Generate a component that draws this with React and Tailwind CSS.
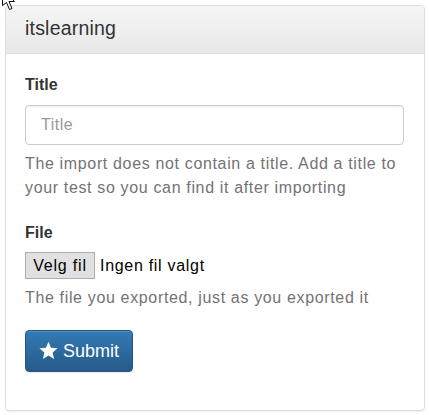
import React from "react";

function Star() {
  return (
    <svg width="19" height="19" viewBox="0 0 24 24" className="mr-[5px] mb-[1px]">
      <path
        d="M12 1l3.2 7.5 8.3.7-6.3 5.4 1.9 8.1L12 18.4l-7.1 4.3 1.9-8.1L.5 9.2l8.3-.7z"
        fill="#fff"
      />
    </svg>
  );
}

export default function App() {
  return (
    <div
      className="relative w-[429px] h-[415px] bg-white pt-[5px] pl-[5px]"
      style={{ fontFamily: '"Liberation Sans", Arial, sans-serif' }}
    >
      <svg
        width="18"
        height="12"
        viewBox="0 0 18 12"
        className="absolute left-0 top-0 z-10"
      >
        <path d="M2.5 -10 L2.5 5.5 L6.5 2.5 L9.5 9.5 L12 8.5 L9 1.5 L14.5 1.5 Z" fill="#fff" stroke="#111" strokeWidth="1" />
      </svg>
      <div className="w-[420px] h-[406px] border border-[#ddd] rounded-[4px] shadow-[0_1px_1px_rgba(0,0,0,0.05)] overflow-hidden">
        <div className="h-[48px] border-b border-[#ddd] bg-gradient-to-b from-[#f5f5f5] to-[#e8e8e8] px-[19px] flex items-center">
          <h3 className="text-[19.5px] text-[#333] leading-none pb-[1px] tracking-[0.2px]">itslearning</h3>
        </div>
        <div className="px-[19px] pt-[19px] text-[16px] leading-[24px]">
          <label className="block font-bold text-[#333]">Title</label>
          <div className="mt-[8px] w-[379px] h-[40px] border border-[#ccc] rounded-[4px] shadow-[inset_0_1px_1px_rgba(0,0,0,0.075)] flex items-center pl-[15px] text-[#999] tracking-[0.5px]">
            Title
          </div>
          <p className="mt-[7px] text-[#737373] tracking-[0.65px]">
            The import does not contain a title. Add a title to your test so you can find it after importing
          </p>
          <label className="block font-bold text-[#333] mt-[21px]">File</label>
          <div className="mt-[7px] flex items-center">
            <div className="w-[70px] h-[27px] border border-[#adadad] bg-[#e1e1e1] flex items-center justify-center text-black tracking-[0.8px]">
              Velg fil
            </div>
            <span className="ml-[5px] text-black tracking-[0.7px]">Ingen fil valgt</span>
          </div>
          <p className="mt-[7px] text-[#737373] tracking-[0.65px]">The file you exported, just as you exported it</p>
          <div className="mt-[20px] w-[108px] h-[42px] rounded-[4px] border border-[#245580] bg-gradient-to-b from-[#337ab7] to-[#265a88] flex items-center justify-center text-white text-[18px] shadow-[inset_0_1px_0_rgba(255,255,255,0.15),0_1px_1px_rgba(0,0,0,0.075)]">
            <Star />
            Submit
          </div>
        </div>
      </div>
    </div>
  );
}
